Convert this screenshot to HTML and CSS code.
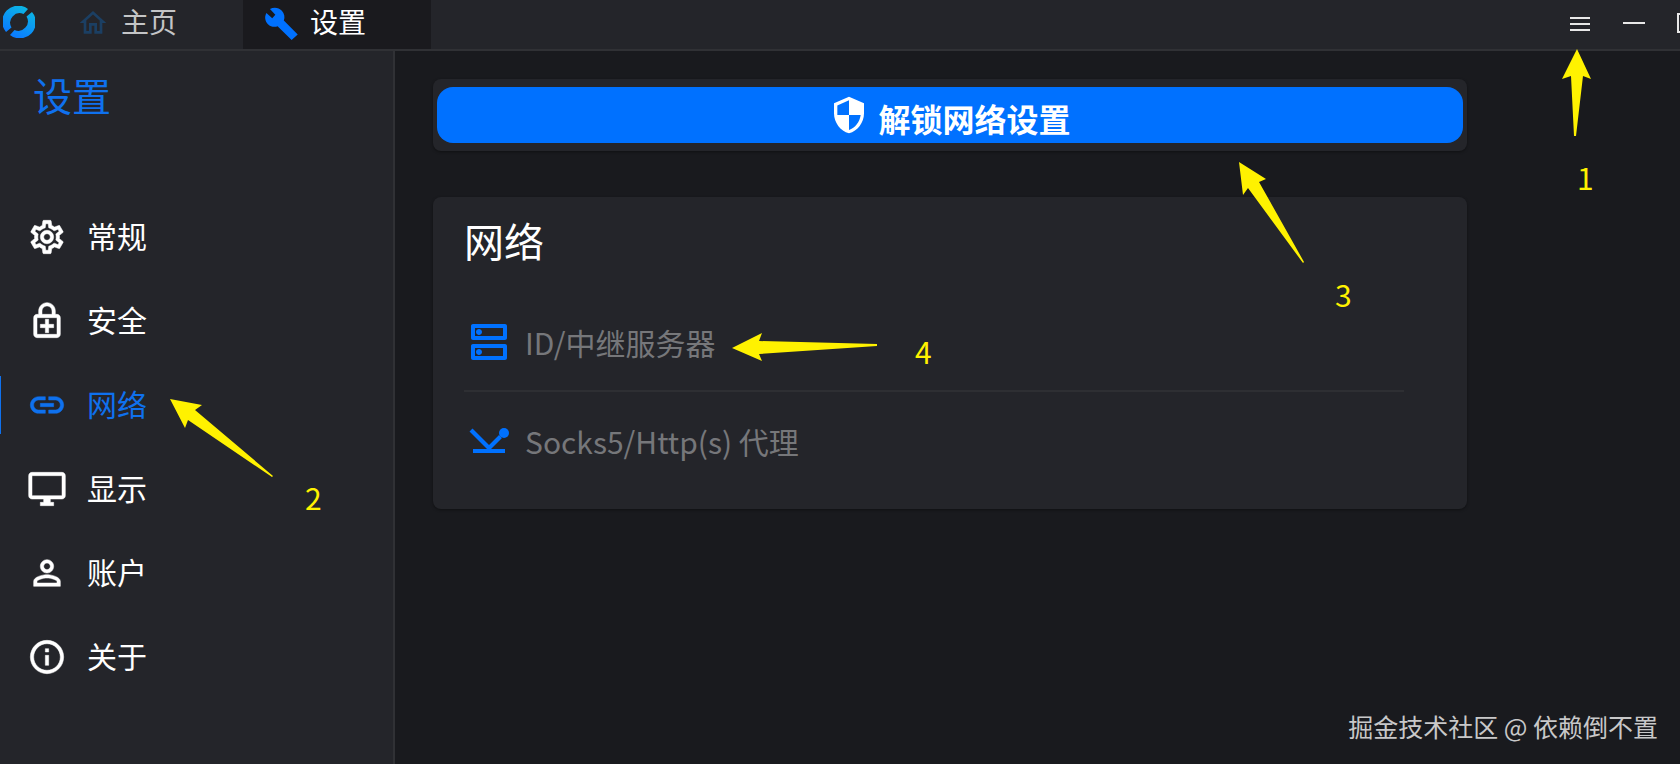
FILE: index.html
```html
<!DOCTYPE html>
<html lang="zh-CN">
<head>
    <meta charset="UTF-8">
    <meta name="viewport" content="width=device-width, initial-scale=1.0">
    <title>设置</title>
    <link rel="stylesheet" href="styles.css">
</head>
<body>
    <div class="app">
        <header class="topbar">
            <svg class="logo" viewBox="0 0 32 32">
                <defs>
                    <linearGradient id="ring" gradientUnits="userSpaceOnUse" x1="26" y1="4" x2="12" y2="30">
                        <stop offset="0" stop-color="#0cb4e4"/>
                        <stop offset="1" stop-color="#0a7cff"/>
                    </linearGradient>
                </defs>
                <path fill="url(#ring)" d="M25 3A16 16 0 0 0 3 26L8.500 21.500A9.500 9.500 0 0 1 20.500 8Z"/>
                <path fill="url(#ring)" d="M7 29A16 16 0 0 0 29 6L23.500 10.500A9.500 9.500 0 0 1 11.500 24Z"/>
            </svg>
            <nav class="tabs">
                <a href="#" class="tab">
                    <svg class="home" viewBox="0 0 24 24"><path d="M12 5.690l5 4.500V18h-2v-6H9v6H7v-7.810l5-4.500M12 3L2 12h3v8h6v-6h2v6h6v-8h3L12 3z"/></svg>
                    <span>主页</span>
                </a>
                <a href="#" class="tab act">
                    <svg class="build" viewBox="0 0 24 24"><path d="M23.800 20.200L14 10.300c.9-2.400.4-5.100-1.400-7C10.400 1 6.800.6 4.200 2.200L8 6.200 5.800 8.700 1.700 4.900C.2 7.500.7 10.700 2.800 12.800c1.900 1.900 4.500 2.300 6.800 1.500l9.900 9.700z"/></svg>
                    <span>设置</span>
                </a>
            </nav>
            <div class="win">
                <button aria-label="菜单"><svg viewBox="0 0 24 24"><path d="M2 6h20M2 12h20M2 18h20"/></svg></button>
                <button aria-label="最小化"><svg viewBox="0 0 24 24"><path d="M1 11h22"/></svg></button>
                <button aria-label="最大化"><svg viewBox="0 0 24 24"><rect x="2" y="2" width="20" height="18"/></svg></button>
            </div>
        </header>

        <div class="body">
            <aside class="side">
                <h1>设置</h1>
                <ul class="menu">
                    <li><a href="#">
                        <svg viewBox="0 0 24 24"><path d="M19.430 12.980c.04-.32.07-.64.07-.98 0-.34-.03-.66-.07-.98l2.110-1.650c.19-.15.24-.42.12-.64l-2-3.460c-.09-.16-.26-.25-.44-.25-.06 0-.12.01-.17.03l-2.490 1c-.52-.4-1.080-.73-1.690-.98l-.38-2.650C14.460 2.180 14.250 2 14 2h-4c-.25 0-.46.18-.49.42l-.38 2.650c-.61.25-1.170.59-1.690.98l-2.490-1c-.06-.02-.12-.03-.18-.03-.17 0-.34.09-.43.25l-2 3.460c-.13.22-.07.49.12.64l2.110 1.650c-.04.32-.07.65-.07.98 0 .33.03.66.07.98l-2.110 1.650c-.19.15-.24.42-.12.64l2 3.460c.09.16.26.25.44.25.06 0 .12-.01.17-.03l2.490-1c.52.4 1.080.73 1.690.98l.38 2.650c.03.24.24.42.49.42h4c.25 0 .46-.18.49-.42l.38-2.650c.61-.25 1.170-.59 1.690-.98l2.490 1c.06.02.12.03.18.03.17 0 .34-.09.43-.25l2-3.460c.12-.22.07-.49-.12-.64l-2.110-1.650zm-1.980-1.710c.04.31.05.52.05.73 0 .21-.02.43-.05.73l-.14 1.130.89.7 1.080.84-.7 1.210-1.270-.51-1.040-.42-.9.68c-.43.32-.84.56-1.250.73l-1.060.43-.16 1.130-.2 1.350h-1.400l-.19-1.350-.16-1.130-1.060-.43c-.43-.18-.83-.41-1.230-.71l-.91-.7-1.060.43-1.270.51-.7-1.210 1.080-.84.89-.7-.14-1.130c-.03-.31-.05-.54-.05-.74s.02-.43.05-.73l.14-1.130-.89-.7-1.080-.84.7-1.210 1.270.51 1.040.42.9-.68c.43-.32.84-.56 1.250-.73l1.060-.43.16-1.130.2-1.350h1.390l.19 1.350.16 1.130 1.060.43c.43.18.83.41 1.230.71l.91.7 1.060-.43 1.270-.51.7 1.210-1.070.85-.89.7.14 1.130zM12 8c-2.210 0-4 1.790-4 4s1.790 4 4 4 4-1.790 4-4-1.790-4-4-4zm0 6c-1.100 0-2-.9-2-2s.9-2 2-2 2 .9 2 2-.9 2-2 2z"/></svg>
                        <span>常规</span>
                    </a></li>
                    <li><a href="#">
                        <svg viewBox="0 0 24 24"><path d="M18 8h-1V6c0-2.760-2.240-5-5-5S7 3.240 7 6v2H6c-1.100 0-2 .9-2 2v10c0 1.100.9 2 2 2h12c1.100 0 2-.9 2-2V10c0-1.100-.9-2-2-2zM9 6c0-1.710 1.290-3 3-3s3 1.290 3 3v2H9V6zm9 14H6V10h12v10zm-7-1h2v-3h3v-2h-3v-3h-2v3H8v2h3z"/></svg>
                        <span>安全</span>
                    </a></li>
                    <li class="act"><a href="#">
                        <svg viewBox="0 0 24 24"><path d="M17 7h-4v2h4c1.650 0 3 1.350 3 3s-1.350 3-3 3h-4v2h4c2.760 0 5-2.240 5-5s-2.240-5-5-5zm-6 8H7c-1.650 0-3-1.350-3-3s1.350-3 3-3h4V7H7c-2.760 0-5 2.240-5 5s2.240 5 5 5h4v-2zm-3-4h8v2H8z"/></svg>
                        <span>网络</span>
                    </a></li>
                    <li><a href="#">
                        <svg viewBox="0 0 24 24"><path d="M21 2H3c-1.100 0-2 .9-2 2v12c0 1.100.9 2 2 2h7v2H8v2h8v-2h-2v-2h7c1.100 0 2-.9 2-2V4c0-1.100-.9-2-2-2zm0 14H3V4h18v12z"/></svg>
                        <span>显示</span>
                    </a></li>
                    <li><a href="#">
                        <svg viewBox="0 0 24 24"><path d="M12 6c1.100 0 2 .9 2 2s-.9 2-2 2-2-.9-2-2 .9-2 2-2m0 9c2.700 0 5.800 1.290 6 2v1H6v-.99c.2-.72 3.300-2.010 6-2.010m0-11C9.790 4 8 5.790 8 8s1.790 4 4 4 4-1.790 4-4-1.790-4-4-4zm0 9c-2.670 0-8 1.340-8 4v3h16v-3c0-2.660-5.330-4-8-4z"/></svg>
                        <span>账户</span>
                    </a></li>
                    <li><a href="#">
                        <svg viewBox="0 0 24 24"><path d="M11 7h2v2h-2zm0 4h2v6h-2zm1-9C6.480 2 2 6.480 2 12s4.480 10 10 10 10-4.480 10-10S17.520 2 12 2zm0 18c-4.410 0-8-3.590-8-8s3.590-8 8-8 8 3.590 8 8-3.590 8-8 8z"/></svg>
                        <span>关于</span>
                    </a></li>
                </ul>
            </aside>

            <main class="content">
                <div class="card unlock">
                    <button>
                        <svg viewBox="0 0 24 24"><path d="M12 1L3 5v6c0 5.550 3.840 10.740 9 12 5.160-1.260 9-6.450 9-12V5l-9-4zm0 10.990h7c-.53 4.120-3.280 7.790-7 8.940V12H5V6.300l7-3.110v8.800z"/></svg>
                        <span>解锁网络设置</span>
                    </button>
                </div>
                <section class="card net">
                    <h2>网络</h2>
                    <button class="row" disabled>
                        <svg viewBox="0 0 24 24"><path d="M19 15v4H5v-4h14m1-2H4c-.55 0-1 .45-1 1v6c0 .55.45 1 1 1h16c.55 0 1-.45 1-1v-6c0-.55-.45-1-1-1zM7 18.500c-.82 0-1.500-.67-1.500-1.500s.68-1.500 1.500-1.500 1.500.67 1.500 1.500-.67 1.500-1.500 1.500zM19 5v4H5V5h14m1-2H4c-.55 0-1 .45-1 1v6c0 .55.45 1 1 1h16c.55 0 1-.45 1-1V4c0-.55-.45-1-1-1zM7 8.500c-.82 0-1.500-.67-1.500-1.500S6.180 5.500 7 5.500s1.500.68 1.500 1.500S7.830 8.500 7 8.500z"/></svg>
                        ID/中继服务器
                    </button>
                    <button class="row" disabled>
                        <svg viewBox="0 0 48 48"><path d="M8 32h32v4H8z"/><path d="M4.500 14.500l3-3L24 28l10-10 3 3-12 12h-2z"/><circle cx="39" cy="16" r="5"/></svg>
                        Socks5/Http(s) 代理
                    </button>
                </section>
            </main>
        </div>

        <footer class="mark">掘金技术社区 @ 依赖倒不置</footer>

        <!-- 步骤标注 -->
        <div class="notes">
            <svg viewBox="0 0 1680 764">
                <path d="M1577 49l14 30-8-3-7 60h-2l-3-60-9 3z"/>
                <path d="M170 399l32 6-7 5 78 66-1 1-84-57-3 8z"/>
                <path d="M1239 162l27 17-7 3 45 80-1 1-55-75-5 7z"/>
                <path d="M732 348l30-15-3 8 118 3v2l-118 8 3 7z"/>
            </svg>
            <b class="n1">1</b>
            <b class="n2">2</b>
            <b class="n3">3</b>
            <b class="n4">4</b>
        </div>
    </div>
</body>
</html>
```

FILE: styles.css
```css
*{
    margin: 0;
    padding: 0;
    box-sizing: border-box;
}
body{
    background-color: #191a1e;
    color: white;
    font-family: "Noto Sans CJK SC", sans-serif;
    font-size: 30px;
}
a{
    color: inherit;
    text-decoration: none;
}
button{
    border: none;
    background: none;
    color: inherit;
    font: inherit;
}
svg{
    fill: currentColor;
    flex: none;
}
.app{
    position: relative;
    min-height: 100vh;
    display: flex;
    flex-direction: column;
    overflow: hidden;
}

/* 顶部标签栏 */
.topbar{
    display: flex;
    height: 51px;
    background-color: #24252a;
    border-bottom: 2px solid #303135;
}
.logo{
    width: 32px;
    height: 32px;
    margin: 6px 0 0 3px;
}
.tabs{
    display: flex;
    margin-left: 20px;
    font-size: 28px;
}
.tab{
    display: flex;
    align-items: center;
    width: 188px;
    padding-left: 22px;
    padding-bottom: 4px;
    gap: 12px;
    color: #c4c5c7;
}
.tab span{
    padding-bottom: 4px;
}
.tab.act{
    padding-left: 21px;
    background-color: #1a1a1e;
    color: white;
}
.home{
    width: 32px;
    height: 32px;
    color: #1b3f63;
}
.build{
    width: 34px;
    height: 34px;
    color: #0071ff;
}
.win{
    display: flex;
    margin-left: auto;
    margin-right: -35px;
}
.win button{
    width: 54px;
    padding-bottom: 2px;
    display: flex;
    align-items: center;
    justify-content: center;
}
.win svg{
    width: 24px;
    height: 24px;
    fill: none;
    stroke: #e8e8e8;
    stroke-width: 2;
}

.body{
    flex: 1;
    display: flex;
}

/* 左侧菜单 */
.side{
    width: 395px;
    flex: none;
    background-color: #24252a;
    border-right: 2px solid #303135;
}
.side h1{
    padding: 13px 33px 19px;
    font-size: 39px;
    line-height: 60px;
    font-weight: 400;
    color: #0f71ee;
}
.menu{
    list-style: none;
    margin-top: 65px;
    display: flex;
    flex-direction: column;
    gap: 26px;
}
.menu a{
    height: 58px;
    padding-left: 26px;
    border-left: 1px solid transparent;
    display: flex;
    align-items: center;
    gap: 20px;
}
.menu .act a{
    color: #0f71ee;
    border-color: #0f71ee;
}
.menu span{
    padding-bottom: 4px;
}
.menu svg{
    width: 40px;
    height: 40px;
    stroke: currentColor;
    stroke-width: .3;
}

/* 右侧内容 */
.content{
    flex: 1;
    max-width: 1110px;
    padding: 28px 38px;
}
.card{
    background-color: #24252a;
    border-radius: 8px;
    box-shadow: 0 1px 3px rgba(0,0,0,.4);
}
.unlock{
    padding: 8px 4px;
}
.unlock button{
    width: 100%;
    height: 56px;
    border-radius: 16px;
    background-color: #0071ff;
    display: flex;
    align-items: center;
    justify-content: center;
    gap: 9px;
    font-size: 32px;
    font-weight: 700;
}
.unlock svg{
    width: 40px;
    height: 40px;
}
.unlock span{
    padding-top: 6px;
}
.net{
    margin-top: 46px;
    padding: 13px 63px 19px 31px;
}
.net h2{
    font-size: 40px;
    line-height: 60px;
    font-weight: 400;
}
.row{
    width: 100%;
    height: 98px;
    display: flex;
    align-items: center;
    gap: 12px;
    padding-left: 1px;
    color: #76777a;
}
.net h2 + .row{
    margin-top: 24px;
    border-bottom: 2px solid #2e2f33;
}
.row svg{
    width: 48px;
    height: 48px;
    color: #0071ff;
}

.mark{
    position: absolute;
    right: 22px;
    bottom: 20px;
    font-size: 25px;
    color: #c8c8c9;
}

.notes{
    position: absolute;
    left: 0;
    top: 0;
    width: 1680px;
    height: 764px;
    color: #fff200;
    pointer-events: none;
}
.notes b{
    position: absolute;
    font-weight: 400;
    line-height: 44px;
}
.n1{ left: 1577px; top: 155px; }
.n2{ left: 305px; top: 475px; }
.n3{ left: 1335px; top: 272px; }
.n4{ left: 915px; top: 329px; }
```
